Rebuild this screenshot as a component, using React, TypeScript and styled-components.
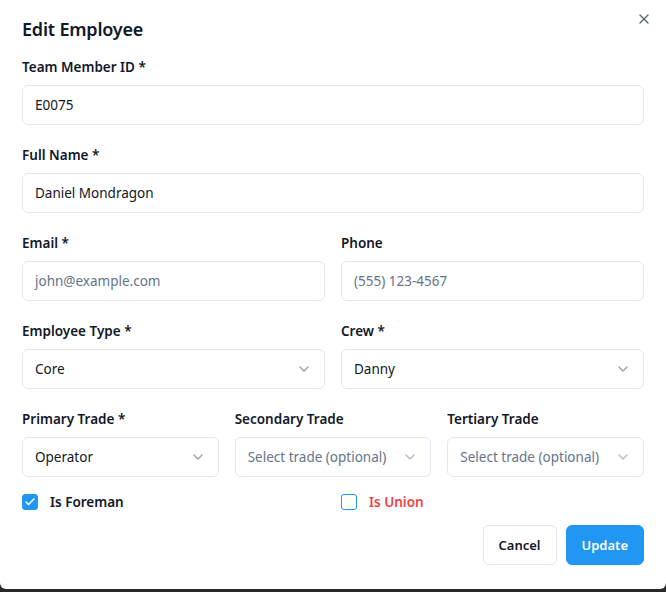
import React from 'react';
import styled, { createGlobalStyle } from 'styled-components';
import { ChevronDown, X, Check } from 'lucide-react';

const GlobalStyle = createGlobalStyle`
  * { box-sizing: border-box; }
  html, body {
    margin: 0;
    padding: 0;
    background: #2a2a2a;
    font-family: 'Noto Sans', 'Open Sans', sans-serif;
  }
`;

const Dialog = styled.div`
  position: relative;
  width: 666px;
  height: 589px;
  background: #ffffff;
  border-radius: 0 0 6px 6px;
  padding: 17px 22px 24px 22px;
  display: flex;
  flex-direction: column;
`;

const Title = styled.h2`
  margin: 0 0 16px;
  font-size: 18px;
  line-height: 24px;
  font-weight: 600;
  color: #111827;
  letter-spacing: -0.2px;
`;

const CloseButton = styled.button`
  position: absolute;
  top: 11px;
  right: 14px;
  width: 16px;
  height: 16px;
  padding: 0;
  border: none;
  background: none;
  color: #374151;
  opacity: 0.8;
  display: flex;
  align-items: center;
  justify-content: center;
`;

const Form = styled.div`
  display: flex;
  flex-direction: column;
  gap: 20px;
`;

const Row = styled.div<{ $cols: number }>`
  display: grid;
  grid-template-columns: repeat(${(p) => p.$cols}, 1fr);
  gap: 16px;
`;

const Field = styled.div`
  display: flex;
  flex-direction: column;
  gap: 8px;
`;

const Label = styled.label`
  font-size: 13.5px;
  line-height: 20px;
  font-weight: 600;
  color: #111827;
`;

const Input = styled.div<{ $placeholder?: boolean }>`
  height: 40px;
  border: 1px solid #e2e8f0;
  border-radius: 6px;
  padding: 0 12px;
  display: flex;
  align-items: center;
  justify-content: space-between;
  font-size: 13.5px;
  color: ${(p) => (p.$placeholder ? '#64748b' : '#111827')};
  white-space: nowrap;
  overflow: hidden;
`;

const Chevron = styled(ChevronDown)<{ $faint?: boolean }>`
  flex-shrink: 0;
  color: #374151;
  opacity: ${(p) => (p.$faint ? 0.35 : 0.5)};
`;

const CheckRow = styled.div`
  display: grid;
  grid-template-columns: 1fr 1fr;
  gap: 16px;
  margin-top: -5px;
`;

const CheckItem = styled.div`
  display: flex;
  align-items: center;
  gap: 12px;
  height: 20px;
`;

const Box = styled.span<{ $checked?: boolean }>`
  width: 16px;
  height: 16px;
  border-radius: 3px;
  border: 1px solid #2196f3;
  background: ${(p) => (p.$checked ? '#2196f3' : '#ffffff')};
  display: flex;
  align-items: center;
  justify-content: center;
  color: #fff;
`;

const CheckLabel = styled.span<{ $danger?: boolean }>`
  font-size: 13.5px;
  font-weight: 600;
  color: ${(p) => (p.$danger ? '#ef4444' : '#111827')};
`;

const Footer = styled.div`
  display: flex;
  justify-content: flex-end;
  gap: 9px;
  margin-top: 13px;
`;

const Button = styled.button<{ $primary?: boolean }>`
  height: 40px;
  padding: 0 15px;
  border-radius: 6px;
  font-family: inherit;
  font-size: 13px;
  font-weight: 600;
  border: 1px solid ${(p) => (p.$primary ? '#2196f3' : '#e2e8f0')};
  background: ${(p) => (p.$primary ? '#2196f3' : '#ffffff')};
  color: ${(p) => (p.$primary ? '#ffffff' : '#111827')};
`;

type SelectProps = { value?: string; placeholder?: string };

const Select: React.FC<SelectProps> = ({ value, placeholder }) => (
  <Input $placeholder={!value}>
    <span>{value || placeholder}</span>
    <Chevron size={16} $faint={!value} />
  </Input>
);

const App: React.FC = () => {
  return (
    <>
      <GlobalStyle />
      <Dialog>
        <Title>Edit Employee</Title>
        <CloseButton>
          <X size={16} />
        </CloseButton>
        <Form>
          <Field>
            <Label>Team Member ID *</Label>
            <Input>E0075</Input>
          </Field>
          <Field>
            <Label>Full Name *</Label>
            <Input>Daniel Mondragon</Input>
          </Field>
          <Row $cols={2}>
            <Field>
              <Label>Email *</Label>
              <Input $placeholder>john@example.com</Input>
            </Field>
            <Field>
              <Label>Phone</Label>
              <Input $placeholder>(555) 123-4567</Input>
            </Field>
          </Row>
          <Row $cols={2}>
            <Field>
              <Label>Employee Type *</Label>
              <Select value="Core" />
            </Field>
            <Field>
              <Label>Crew *</Label>
              <Select value="Danny" />
            </Field>
          </Row>
          <Row $cols={3}>
            <Field>
              <Label>Primary Trade *</Label>
              <Select value="Operator" />
            </Field>
            <Field>
              <Label>Secondary Trade</Label>
              <Select placeholder="Select trade (optional)" />
            </Field>
            <Field>
              <Label>Tertiary Trade</Label>
              <Select placeholder="Select trade (optional)" />
            </Field>
          </Row>
          <CheckRow>
            <CheckItem>
              <Box $checked>
                <Check size={12} strokeWidth={3} />
              </Box>
              <CheckLabel>Is Foreman</CheckLabel>
            </CheckItem>
            <CheckItem>
              <Box />
              <CheckLabel $danger>Is Union</CheckLabel>
            </CheckItem>
          </CheckRow>
        </Form>
        <Footer>
          <Button>Cancel</Button>
          <Button $primary>Update</Button>
        </Footer>
      </Dialog>
    </>
  );
};

export default App;
